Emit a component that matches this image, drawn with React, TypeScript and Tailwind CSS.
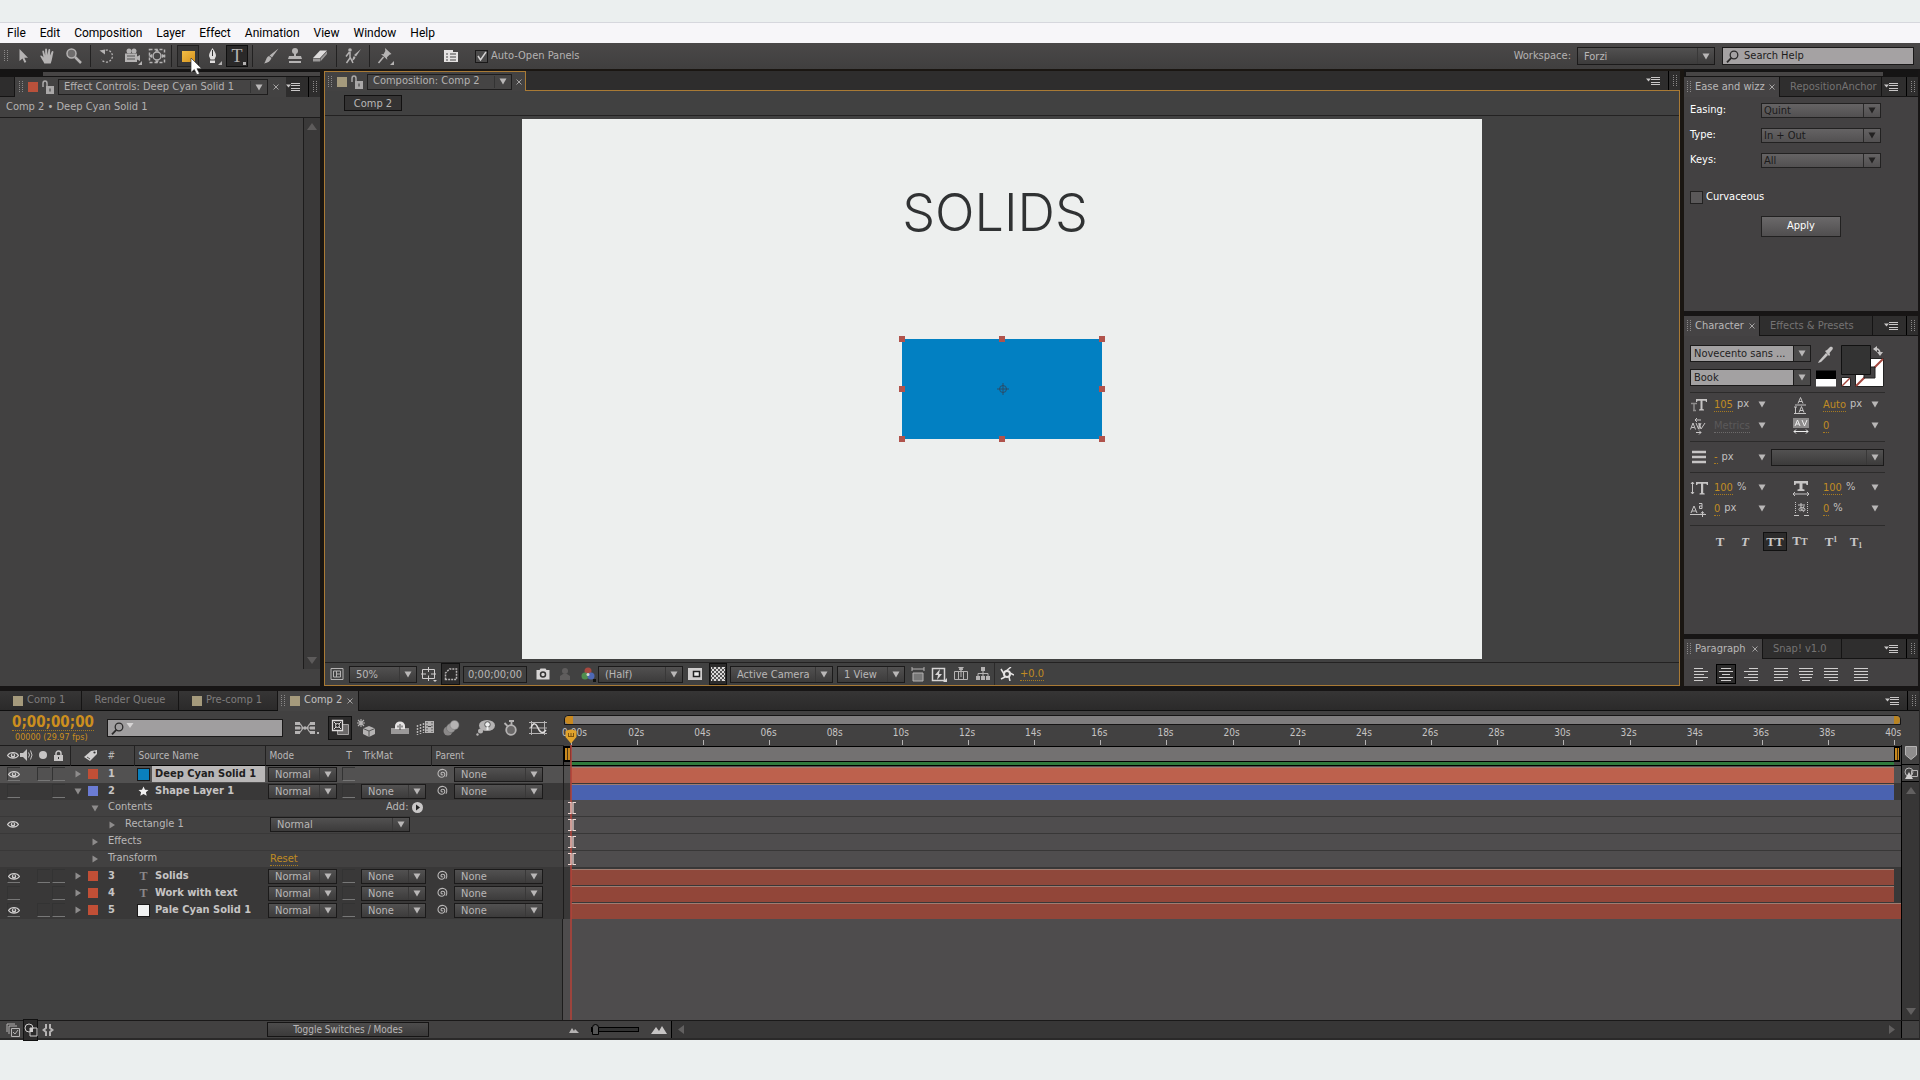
import type { ReactNode } from 'react';

const menus = ['File', 'Edit', 'Composition', 'Layer', 'Effect', 'Animation', 'View', 'Window', 'Help'];

const seconds = ['00s', '02s', '04s', '06s', '08s', '10s', '12s', '14s', '16s', '18s', '20s', '22s', '24s', '26s', '28s', '30s', '32s', '34s', '36s', '38s'];

type Row = {
  kind: 'layer' | 'group';
  name: string;
  id?: number;
  eye?: boolean;
  solo?: boolean;
  open?: boolean;
  selected?: boolean;
  swatch?: string;
  icon?: 'cyan' | 'pale' | 'star' | 'text';
  trkMat?: boolean;
  bar?: string;
  full?: boolean;
  indent?: string;
};

const rows: Row[] = [
  { kind: 'layer', id: 1, name: 'Deep Cyan Solid 1', eye: true, solo: true, selected: true, swatch: 'bg-[#c14f36]', icon: 'cyan', bar: 'bg-[#bd614d]' },
  { kind: 'layer', id: 2, name: 'Shape Layer 1', open: true, swatch: 'bg-[#6b7bd3]', icon: 'star', trkMat: true, bar: 'bg-[#4a62b0]' },
  { kind: 'group', name: 'Contents', open: true, indent: 'pl-[21px]' },
  { kind: 'group', name: 'Rectangle 1', eye: true, indent: 'pl-[38px]' },
  { kind: 'group', name: 'Effects', indent: 'pl-[21px]' },
  { kind: 'group', name: 'Transform', indent: 'pl-[21px]' },
  { kind: 'layer', id: 3, name: 'Solids', eye: true, solo: true, swatch: 'bg-[#c14f36]', icon: 'text', trkMat: true, bar: 'bg-[#8f483b]' },
  { kind: 'layer', id: 4, name: 'Work with text', swatch: 'bg-[#c14f36]', icon: 'text', trkMat: true, bar: 'bg-[#924639]' },
  { kind: 'layer', id: 5, name: 'Pale Cyan Solid 1', eye: true, solo: true, swatch: 'bg-[#c14f36]', icon: 'pale', trkMat: true, bar: 'bg-[#924639]', full: true },
];

function Icon({ children, w = 18, h = 18, className = '' }: { children: ReactNode; w?: number; h?: number; className?: string }) {
  return (
    <svg width={w} height={h} viewBox={`0 0 ${w} ${h}`} className={`shrink-0 ${className}`} fill="none" aria-hidden="true">
      {children}
    </svg>
  );
}

function Down({ className = 'text-[#b9b7b7]' }: { className?: string }) {
  return (
    <Icon w={8} h={7} className={className}>
      <path d="M0.500 0.500h7L4 6.500z" fill="currentColor" />
    </Icon>
  );
}

function Grip() {
  return (
    <Icon w={4} h={12} className="text-[#8b8989]">
      <path d="M0.500 0v12M3.500 0v12" stroke="currentColor" strokeDasharray="1 1" />
    </Icon>
  );
}

function PanelMenu() {
  return (
    <div className="flex h-full shrink-0 items-center">
      <button aria-label="Panel menu" className="mr-2 flex">
        <Icon w={14} h={10} className="text-[#c9c7c7]">
          <path d="M0 2.500h5L2.500 5.500zM5 1h9v1H5zM5 3h9v1H5zM5 6h9v1H5zM5 8h9v1H5z" fill="currentColor" />
        </Icon>
      </button>
      <div className="flex h-full w-3 items-center justify-center border-l border-black">
        <Grip />
      </div>
    </div>
  );
}

function CloseX() {
  return (
    <button aria-label="Close tab" className="flex shrink-0">
      <Icon w={6} h={6} className="text-[#a5a3a3]">
        <path d="M0.500 0.500l5 5M5.500 0.500l-5 5" stroke="currentColor" />
      </Icon>
    </button>
  );
}

function Lock() {
  return (
    <Icon w={12} h={14} className="text-[#aaa8a8]">
      <path d="M1 7V3.500C1 2 1.800 1 3 1s2 1 2 2.500V6" stroke="currentColor" strokeWidth="1.500" />
      <path d="M4 6h8v8H4z" fill="currentColor" />
      <path d="M7.500 8.500h1v3h-1z" fill="#333" />
    </Icon>
  );
}

function Dropdown({ label, value, className, tone = 'dark', id }: { label: string; value: string; className: string; tone?: 'dark' | 'light' | 'mid'; id?: string }) {
  const tones = {
    dark: 'border-[#1b1a1a] bg-linear-to-b from-[#525151] to-[#3c3b3b] text-[#b9b7b7] pl-[6px]',
    mid: 'border-[#222121] bg-linear-to-b from-[#656364] to-[#525051] text-[#1b1a1a] pl-[2px]',
    light: 'border-[#1b1a1a] bg-[#a3a1a2] text-[#1f1e1e] pl-[3px]',
  };
  return (
    <div className={`relative shrink-0 ${className}`}>
      <select id={id} aria-label={label} defaultValue={value} className={`block h-full w-full appearance-none overflow-hidden rounded-none border pr-4 leading-none outline-none ${tones[tone]}`}>
        <option>{value}</option>
      </select>
      <span className={`pointer-events-none absolute inset-y-px right-px flex w-[17px] items-center justify-center border-l ${tone === 'light' ? 'border-[#1b1a1a] bg-[#4b4a4a]' : tone === 'mid' ? 'border-[#2a2929]' : 'border-[#393838]'}`}>
        <Down className={tone === 'mid' ? 'text-[#222121]' : 'text-[#b9b7b7]'} />
      </span>
    </div>
  );
}

function Eye() {
  return (
    <Icon w={12} h={9} className="text-[#d0cece]">
      <path d="M0.500 4.500C3 0.500 9 0.500 11.500 4.500 9 8 3 8 0.500 4.500z" stroke="currentColor" strokeWidth="1.200" />
      <circle cx="6" cy="4.500" r="2.200" fill="currentColor" />
      <circle cx="6" cy="4" r="0.900" fill="#333" />
    </Icon>
  );
}

function Swirl() {
  return (
    <Icon w={12} h={12} className="text-[#b9b7b7]">
      <path d="M7 6.500c-.8.9-2.200.3-2-.9.200-1.500 2.300-1.900 3.300-.7 1.200 1.600.2 4-2 4.300C3.600 9.500 1.700 7.500 2 5c.4-2.700 3-4 5.500-3.500 1.600.3 2.800 1.500 3.200 3 .3 1.500 0 3-.8 4.300" stroke="currentColor" strokeWidth="1.100" />
    </Icon>
  );
}

function Twirl({ open }: { open?: boolean }) {
  return (
    <button aria-label={open ? 'Collapse' : 'Expand'} className="flex w-2 shrink-0 justify-center">
      <Icon w={8} h={8} className="text-[#8e8c8c]">
        <path d={open ? 'M0.500 1.500h7L4 7.500z' : 'M1.500 0.500v7L7 4z'} fill="currentColor" />
      </Icon>
    </button>
  );
}

function Sep() {
  return <div className="h-[22px] w-px shrink-0 bg-[#222121]" />;
}

function Tool({ label, className, children }: { label: string; className: string; children: ReactNode }) {
  return (
    <button aria-label={label} className={`relative flex h-[22px] shrink-0 items-center justify-center text-[#b5b3b3] ${className}`}>
      {children}
    </button>
  );
}

function MenuBar() {
  return (
    <nav className="flex h-[21px] items-center border-t border-[#d6d7dd] bg-[#f7f6f9] pl-[7px] font-['Roboto','Noto_Sans',sans-serif] text-[12px] text-black">
      {menus.map((menu) => (
        <button key={menu} className="mr-[14px] leading-none">{menu}</button>
      ))}
    </nav>
  );
}

function Toolbar() {
  return (
    <div className="flex h-[26px] items-center bg-linear-to-b from-[#4a4848] to-[#403f3f] pr-[6px]">
      <div className="flex w-[12px] justify-center"><Grip /></div>
      <Tool label="Selection" className="w-[22px]">
        <Icon><path d="M5.500 2v12l3-2.500 2 4.300 1.800-.8-2-4.200h3.700z" fill="currentColor" /></Icon>
      </Tool>
      <Tool label="Hand" className="w-[27px]">
        <Icon><path d="M5.300 16.500C4 13.500 2 11 1.200 9c.9-1 2.100-.1 3.300 1.500L3.300 4.300c.1-1.200 1.500-1.200 1.700 0l1.200 4.200L6.100 2.500c.1-1.300 1.800-1.300 1.900 0l.5 5.500.9-5.300c.3-1.200 1.800-1 1.800.3L11 8.500l1.700-4c.6-1 1.900-.5 1.700.7-.8 3.300-1.300 7.500-2.700 11.300z" fill="currentColor" /></Icon>
      </Tool>
      <Tool label="Zoom" className="w-[25px]">
        <Icon>
          <circle cx="6.500" cy="6.500" r="4.500" stroke="currentColor" strokeWidth="1.500" fill="#6f6d6d" />
          <path d="M10 10l6 6" stroke="currentColor" strokeWidth="2.500" />
        </Icon>
      </Tool>
      <div className="w-[4px]" />
      <Sep />
      <Tool label="Rotation" className="w-[32px]">
        <Icon>
          <path d="M4.500 4.500A6 6 0 1 1 3.500 12.500" stroke="currentColor" strokeWidth="1.300" strokeDasharray="2 1.500" />
          <path d="M1.500 3.500l5.500-1v5z" fill="currentColor" />
        </Icon>
      </Tool>
      <Tool label="Camera" className="w-[20px]">
        <Icon>
          <circle cx="5" cy="4" r="2.500" fill="currentColor" />
          <circle cx="10" cy="4" r="2.500" fill="currentColor" />
          <path d="M1 6.500h12V15H1zM13 9.500l3-1.500v6l-3-1.500z" fill="currentColor" />
          <path d="M3 9h8M3 12h8" stroke="#555" />
          <path d="M18 14v4h-4z" fill="currentColor" />
        </Icon>
      </Tool>
      <Tool label="Pan behind" className="w-[28px]">
        <Icon>
          <path d="M1.500 2.500h15v13h-15z" stroke="currentColor" strokeWidth="1.500" strokeDasharray="3 2" />
          <circle cx="9" cy="9" r="4" stroke="currentColor" strokeWidth="1.500" />
          <path d="M9 1.500l2 3H7zM9 16.500l2-3H7zM0.500 9l3.500-2v4zM17.500 9L14 7v4z" fill="currentColor" />
        </Icon>
      </Tool>
      <Sep />
      <Tool label="Rectangle" className="ml-[5px] w-[22px] border border-[#232222] bg-[#3a3939]">
        <span className="h-[11px] w-[13px] bg-linear-to-br from-[#f2bd45] to-[#d7941b]" />
        <svg width="14" height="21" viewBox="0 0 14 21" className="absolute top-[11px] left-[12px] z-10" aria-hidden="true">
          <path d="M1 1v14.500l3.300-3 2.600 5.300 2.700-1.100L7 11.700h4.800z" fill="#fff" stroke="#333" strokeWidth="0.700" />
        </svg>
      </Tool>
      <Tool label="Pen" className="ml-[2px] w-[23px]">
        <Icon>
          <path d="M8.500 1C6.500 4 5 6.500 5 9l1.500 3.500h4L12 9C12 6.500 10.500 4 8.500 1zM6 13.500h5V16H6z" fill="#e0dede" />
          <path d="M8.500 3v6" stroke="#333" />
          <path d="M18 14v4h-4z" fill="currentColor" />
        </Icon>
      </Tool>
      <Tool label="Type" className="ml-[2px] w-[22px] border border-[#0f0f0f] bg-[#2a2929]">
        <span className="font-['Liberation_Serif',serif] text-[18px] leading-none">T</span>
        <span className="absolute right-px bottom-px size-[3px] bg-[#b5b3b3]" />
      </Tool>
      <div className="w-[4px]" />
      <Sep />
      <Tool label="Brush" className="ml-[5px] w-[26px]">
        <Icon><path d="M16.500 1.500l-6.500 9-2.500-2zM7 9l2.500 2C8.500 14 6 16 2 16.500 4 14.500 4 10 7 9z" fill="currentColor" /></Icon>
      </Tool>
      <Tool label="Clone stamp" className="w-[22px]">
        <Icon>
          <circle cx="9" cy="4" r="3" fill="currentColor" />
          <path d="M8 6h2v3h5l1 3H2l1-3h5zM3 14h12v2H3z" fill="currentColor" />
        </Icon>
      </Tool>
      <Tool label="Eraser" className="ml-[2px] w-[24px]">
        <Icon>
          <path d="M2 11l7-7.500h7l-7 7.500z" fill="#dedcdc" />
          <path d="M2 11.500h7v3H2zM9.500 11.500l6.500-7v2.500l-6.500 7.500z" fill="#9b9999" />
        </Icon>
      </Tool>
      <div className="w-[4px]" />
      <Sep />
      <Tool label="Roto brush" className="w-[32px]">
        <Icon>
          <circle cx="6" cy="3" r="1.800" fill="currentColor" />
          <path d="M5.500 5L2 9.500M6 5v6l-3.500 5M6 10l3 6" stroke="currentColor" strokeWidth="1.500" />
          <path d="M17 2l-5 7.500-2-1.500zM10 9l1.500 1.500c-.8 2-2 3-4 3.500C9 12.500 8.500 10 10 9z" fill="currentColor" />
        </Icon>
      </Tool>
      <Sep />
      <Tool label="Puppet pin" className="w-[30px]">
        <Icon>
          <path d="M9 1l6.500 6-2 .7-2.500 2.500.3 2.500L5 7l2.500.2L9.300 4z" fill="currentColor" />
          <path d="M7.500 10L2.500 16" stroke="currentColor" strokeWidth="1.500" />
          <path d="M18 14v4h-4z" fill="currentColor" />
        </Icon>
      </Tool>
      <Tool label="Toggle panels" className="ml-[41px] w-[20px]">
        <Icon w={14} h={14} className="text-[#e4e2e2]">
          <path d="M0 1h9v2h5v10H0z" fill="currentColor" />
          <path d="M2 5h2M6 5h6M2 8h2M6 8h6M2 11h2M6 11h6" stroke="#444" />
        </Icon>
      </Tool>
      <label className="ml-[14px] flex items-center gap-[3px] whitespace-nowrap text-[#b4b2b2]">
        <span className="relative flex size-[13px]">
          <input type="checkbox" defaultChecked className="size-[13px] appearance-none border border-[#1a1919] bg-[#4c4b4b]" />
          <Icon w={13} h={13} className="pointer-events-none absolute inset-0">
            <path d="M3 6l2.500 4L11 2" stroke="#d5d3d3" strokeWidth="1.500" />
          </Icon>
        </span>
        Auto-Open Panels
      </label>
      <div className="min-w-4 flex-1" />
      <label htmlFor="workspace" className="mr-[6px] text-[#b4b2b2]">Workspace:</label>
      <Dropdown id="workspace" label="Workspace" value="Forzi" className="h-[18px] w-[138px]" />
      <div className="ml-[7px] flex h-[18px] w-[192px] items-center border border-[#1a1919] bg-[#a5a2a3] pl-[3px] text-[#242323]">
        <SearchGlyph />
        <input type="search" aria-label="Search Help" placeholder="Search Help" className="ml-[5px] w-full bg-transparent outline-none placeholder:text-[#1d1c1c]" />
      </div>
    </div>
  );
}

function SearchGlyph() {
  return (
    <Icon w={13} h={13} className="text-[#2b2a2a]">
      <circle cx="8" cy="5" r="3.800" stroke="currentColor" strokeWidth="1.300" />
      <path d="M5.300 7.800L1 12.300" stroke="currentColor" strokeWidth="1.800" />
    </Icon>
  );
}

function TitleMenu({ text, className }: { text: string; className: string }) {
  return (
    <button className={`flex h-[16px] shrink-0 items-center justify-between border border-[#1e1d1d] bg-[#454444] pl-[5px] whitespace-nowrap text-[#b4b2b2] ${className}`}>
      {text}
      <span className="flex h-[12px] w-[17px] items-center justify-center border-l border-[#333]"><Down /></span>
    </button>
  );
}

function EffectControls() {
  return (
    <section className="flex w-[320px] shrink-0 flex-col bg-[#424141]">
      <div className="flex h-[8px] bg-[#151414] pt-[3px] pl-[43px]"><div className="h-[4px] w-full bg-[#474545]" /></div>
      <div className="flex h-[20px] items-center bg-[#2e2d2d]">
        <div className="h-full w-[15px] border-r border-b border-[#151414]" />
        <div className="flex h-full flex-1 items-center bg-[#434242]">
          <div className="ml-1 flex"><Grip /></div>
          <div className="ml-[5px] size-[10px] bg-[#b9513b]" />
          <div className="mx-[4px] flex"><Lock /></div>
          <TitleMenu text="Effect Controls: Deep Cyan Solid 1" className="w-[210px]" />
          <div className="ml-[5px] flex"><CloseX /></div>
        </div>
        <PanelMenu />
      </div>
      <p className="h-[21px] border-b border-[#1d1c1c] pl-[6px] leading-[20px] text-[#b4b2b2]">Comp 2 • Deep Cyan Solid 1</p>
      <div className="flex flex-1 pb-[17px]">
        <div className="flex-1 border-r border-[#1d1c1c]" />
        <div className="flex w-[16px] flex-col items-center justify-between bg-[#3a3939] py-[5px]">
          <Icon w={10} h={7}><path d="M5 0l5 7H0z" fill="#5d5b5b" /></Icon>
          <Icon w={10} h={7}><path d="M5 7L0 0h10z" fill="#5d5b5b" /></Icon>
        </div>
      </div>
    </section>
  );
}

const handles = [
  '-top-[3px] -left-[3px]', '-top-[3px] left-[calc(50%-3px)]', '-top-[3px] -right-[3px]',
  'top-[calc(50%-3px)] -left-[3px]', 'top-[calc(50%-3px)] -right-[3px]',
  '-bottom-[3px] -left-[3px]', '-bottom-[3px] left-[calc(50%-3px)]', '-right-[3px] -bottom-[3px]',
];

function Viewer() {
  return (
    <section className="flex min-w-0 flex-1 flex-col bg-[#1a1612] px-[4px] pt-[2px]">
      <div className="flex h-[20px] items-stretch bg-[#2e2d2d]">
        <div className="flex items-center border border-b-0 border-[#a97a35] bg-[#434242] pr-[3px]">
          <div className="ml-[3px] flex"><Grip /></div>
          <div className="ml-[5px] size-[10px] bg-[#a59a7c]" />
          <div className="mx-[4px] flex"><Lock /></div>
          <TitleMenu text="Composition: Comp 2" className="w-[145px]" />
          <div className="ml-[4px] flex"><CloseX /></div>
        </div>
        <div className="flex flex-1 justify-end border-b border-[#a97a35]"><PanelMenu /></div>
      </div>
      <div className="flex flex-1 flex-col border border-t-0 border-[#a97a35] bg-[#414141]">
        <div className="flex h-[25px] items-center border-b border-[#232222] pl-[19px]">
          <button className="h-[16px] w-[58px] border border-[#121111] bg-[#343333] leading-none text-[#b9b7b7]">Comp 2</button>
        </div>
        <div className="flex flex-1 justify-center pt-[3px] pb-[3px]">
          <div className="flex aspect-video w-[960px] max-w-full flex-col items-center bg-[#edefee]">
            <h1 className="mt-[62px] mr-[14px] font-['Inter',sans-serif] text-[52px] leading-[64px] font-light text-[#303233]">SOLIDS</h1>
            <div className="relative mt-[94px] h-[100px] w-[200px] bg-[#0280c2]">
              {handles.map((pos) => <span key={pos} className={`absolute size-[6px] bg-[#b0534c] ${pos}`} />)}
              <Icon w={14} h={14} className="absolute top-[43px] left-[94px]">
                <circle cx="7" cy="7" r="3.500" stroke="#2b4d68" />
                <path d="M7 1v12M1 7h12" stroke="#2b4d68" />
              </Icon>
            </div>
          </div>
        </div>
        <ViewerFooter />
      </div>
    </section>
  );
}

function ViewerFooter() {
  return (
    <div className="flex h-[23px] items-center border-t border-[#232222] pl-[5px]">
      <Tool label="Always preview" className="w-[14px]">
        <Icon w={14} h={14}>
          <path d="M1 1.500h12v11H1zM3.500 4h7v6h-7zM6.500 4v6M6.500 7h4" stroke="currentColor" />
        </Icon>
      </Tool>
      <Dropdown label="Magnification" value="50%" className="ml-[5px] h-[17px] w-[68px]" />
      <Tool label="Grid and guides" className="ml-[3px] w-[18px]">
        <Icon w={16} h={16} className="text-[#cfcdcd]">
          <path d="M1.500 3.500h12v9h-12zM7.500 1v5M7.500 9.500V15M0 8h5M10 8h5" stroke="currentColor" />
          <path d="M12 14h4l-2 2z" fill="currentColor" />
        </Icon>
      </Tool>
      <Tool label="Mask visibility" className="ml-[3px] h-[18px] w-[19px] border border-[#111] bg-[#2c2b2b]">
        <Icon w={14} h={14}>
          <path d="M1.500 12.500V6l4-4h7v10.500z" stroke="currentColor" strokeWidth="1.500" strokeDasharray="2 1" />
        </Icon>
      </Tool>
      <button className="ml-[3px] h-[17px] w-[64px] border border-[#1b1a1a] leading-none whitespace-nowrap text-[#b9b7b7]">0;00;00;00</button>
      <Tool label="Snapshot" className="ml-[9px] w-[14px]">
        <Icon w={14} h={14} className="text-[#d7d5d5]">
          <path d="M0.500 3h3l1-1.500h5l1 1.500h3v9.500h-13z" fill="currentColor" />
          <circle cx="7" cy="7.500" r="2.500" fill="#d7d5d5" stroke="#333" strokeWidth="1.500" />
        </Icon>
      </Tool>
      <Tool label="Show snapshot" className="ml-[9px] w-[12px]">
        <Icon w={12} h={14} className="text-[#5f5d5d]">
          <circle cx="6" cy="4" r="3" fill="currentColor" />
          <path d="M1 13V9l3-2h4l3 2v4z" fill="currentColor" />
        </Icon>
      </Tool>
      <Tool label="Channels" className="ml-[9px] w-[16px]">
        <Icon w={16} h={16}>
          <circle cx="8" cy="5" r="3.500" fill="#a8483f" />
          <circle cx="5" cy="10" r="3.500" fill="#4f8d4e" />
          <circle cx="11" cy="10" r="3.500" fill="#4e68b5" />
          <circle cx="8" cy="8.500" r="1.500" fill="#d6d6d6" />
          <path d="M13 13h3v3h-3z" fill="#111" />
        </Icon>
      </Tool>
      <Dropdown label="Resolution" value="(Half)" className="ml-[2px] h-[17px] w-[85px]" />
      <Tool label="Region of interest" className="ml-[4px] w-[16px]">
        <Icon w={14} h={12} className="text-[#cfcdcd]">
          <path d="M0 0h14v12H0z" fill="currentColor" />
          <path d="M5.500 3.500h6v5h-6z" fill="#eee" stroke="#222" strokeWidth="1.500" />
        </Icon>
      </Tool>
      <Tool label="Transparency grid" className="ml-[6px] h-[18px] w-[18px] border border-[#111] bg-[#2c2b2b]">
        <Icon w={14} h={14}>
          <path d="M0 0h14v14H0z" fill="#dad8d8" />
          <path d="M0 3l3-3M0 7l7-7M0 11L11 0M1 14L14 1M5 14l9-9M9 14l5-5M0 11l3 3M0 7l7 7M0 3l11 11M1 0l13 13M5 0l9 9M9 0l5 5" stroke="#444" strokeWidth="0.900" />
        </Icon>
      </Tool>
      <Dropdown label="Camera" value="Active Camera" className="ml-[3px] h-[17px] w-[103px]" />
      <Dropdown label="View layout" value="1 View" className="ml-[4px] h-[17px] w-[68px]" />
      <Tool label="Pixel aspect" className="ml-[5px] w-[15px]">
        <Icon w={14} h={15}><path d="M1 2h12M1 0v4M13 0v4" stroke="currentColor" /><path d="M2 6h10v8H2z" fill="#777" stroke="currentColor" /></Icon>
      </Tool>
      <Tool label="Fast previews" className="ml-[6px] w-[16px]">
        <Icon w={16} h={15} className="text-[#d7d5d5]">
          <path d="M1.500 1.500h12v12h-12z" stroke="currentColor" strokeWidth="1.500" />
          <path d="M9 2L4 8h3l-1 5 5-6H8z" fill="currentColor" />
          <path d="M16 11v4h-4z" fill="currentColor" />
        </Icon>
      </Tool>
      <Tool label="Timeline" className="ml-[6px] w-[15px]">
        <Icon w={14} h={14}><path d="M0.500 4.500h13v8h-13zM4.500 4v9M9.500 4v9M5 2.500h4M7 2v8" stroke="currentColor" /><path d="M4 0h6L7 4z" fill="currentColor" /></Icon>
      </Tool>
      <Tool label="Flowchart" className="ml-[7px] w-[15px]">
        <Icon w={14} h={14}><path d="M5 0h4v4H5zM0 9h4v4H0zM5 9h4v4H5zM10 9h4v4h-4z" fill="currentColor" /><path d="M7 4v5M2 9V6.500h10V9" stroke="currentColor" /></Icon>
      </Tool>
      <div className="ml-[4px] h-full w-px bg-[#2b2a2a]" />
      <Tool label="Reset exposure" className="ml-[4px] w-[16px]">
        <Icon w={14} h={14} className="text-[#e4e2e2]">
          <circle cx="7" cy="7" r="3" stroke="currentColor" strokeWidth="2" />
          <path d="M4 7L1 2M6 4l5-4M10 6l4 2M9 10l1 4M5 10l-4 2" stroke="currentColor" strokeWidth="1.500" />
        </Icon>
      </Tool>
      <button className="ml-[5px] border-b border-dotted border-[#a87b20] leading-[13px] text-[#c08c24]">+0.0</button>
    </div>
  );
}

function PanelTabs({ active, other, activeWidth, otherWidth }: { active: string; other: string; activeWidth: string; otherWidth: string }) {
  return (
    <div className="flex h-[20px] items-center bg-[#2f2e2e]">
      <button className={`flex h-full shrink-0 items-center bg-[#454344] pl-[3px] whitespace-nowrap text-[#b9b7b7] ${activeWidth}`}>
        <Grip />
        <span className="ml-[4px] flex-1 text-left">{active}</span>
        <Icon w={6} h={6} className="mr-[4px] text-[#a5a3a3]"><path d="M0.500 0.500l5 5M5.500 0.500l-5 5" stroke="currentColor" /></Icon>
      </button>
      <button className={`h-full overflow-hidden border-r border-b border-l border-[#151414] pt-px pl-[10px] text-left whitespace-nowrap text-[#757373] ${otherWidth}`}>{other}</button>
      <div className="flex h-full flex-1 justify-end border-b border-[#151414]"><PanelMenu /></div>
    </div>
  );
}

function EaseAndWizz() {
  const fields = [
    { label: 'Easing:', id: 'easing', value: 'Quint' },
    { label: 'Type:', id: 'type', value: 'In + Out' },
    { label: 'Keys:', id: 'keys', value: 'All' },
  ];
  return (
    <section className="h-[242px] bg-[#434142]">
      <div className="h-[8px] bg-[#151414] pt-[3px] pl-[2px]"><div className="h-[4px] w-[197px] bg-[#474545]" /></div>
      <PanelTabs active="Ease and wizz" other="RepositionAnchor" activeWidth="w-[95px]" otherWidth="w-[103px]" />
      <div className="pt-px pl-[6px] text-white">
        {fields.map((field) => (
          <div key={field.id} className="flex h-[25px] items-center">
            <label htmlFor={field.id} className="w-[71px]">{field.label}</label>
            <Dropdown id={field.id} label={field.label} value={field.value} tone="mid" className="h-[15px] w-[120px]" />
          </div>
        ))}
        <label className="mt-[16px] flex items-center gap-[3px]">
          <input type="checkbox" className="size-[13px] appearance-none border border-[#222121] bg-[#5a5859]" />
          Curvaceous
        </label>
        <button className="mt-[10px] ml-[71px] block h-[21px] w-[80px] border border-[#222121] bg-linear-to-b from-[#6b696a] to-[#504e4f]">Apply</button>
      </div>
    </section>
  );
}

function Metric({ icon, value, unit, dim, label, wide }: { icon: ReactNode; value: string; unit?: string; dim?: boolean; label: string; wide?: boolean }) {
  return (
    <div className="flex h-[21px] min-w-0 items-center">
      <Icon w={18} h={18} className="text-[#c6c4c4]">{icon}</Icon>
      <button aria-label={label} className={`border-b border-dotted leading-[13px] ${wide ? 'ml-[13px]' : 'ml-[6px]'} ${dim ? '-mr-[4px] border-[#6d6b6b] text-[#5b595a]' : 'border-[#a87b20] text-[#c08c24]'}`}>{value}</button>
      <span className={`flex-1 whitespace-nowrap text-[#c2c0c0] ${unit ? 'pl-[4px]' : ''}`}>{unit}</span>
      <Down />
    </div>
  );
}

function MetricPair({ children }: { children: ReactNode }) {
  return <div className="grid grid-cols-[76px_87px] gap-x-[26px]">{children}</div>;
}

function Character() {
  return (
    <section className="mt-[5px] h-[318px] bg-[#434142]">
      <PanelTabs active="Character" other="Effects & Presets" activeWidth="w-[75px]" otherWidth="w-[114px]" />
      <div className="w-[201px] pt-[9px] pl-[6px]">
        <div className="flex gap-[5px]">
          <div className="flex flex-col gap-[7px]">
            <Dropdown label="Font family" value="Novecento sans ..." tone="light" className="h-[17px] w-[121px]" />
            <Dropdown label="Font style" value="Book" tone="light" className="h-[17px] w-[121px]" />
          </div>
          <svg width="70" height="44" viewBox="0 0 70 44" fill="none" aria-hidden="true" className="shrink-0">
            <path d="M3 16l7-8 2 2-7 7-3 1zM9 6l2-1 3-3c2-1 4 1 2 3l-2.500 3 .5 2-1 1z" fill="#c6c4c4" />
            <path d="M0 25.500h20V34H0z" fill="#000" />
            <path d="M0 34h20v7.500H0z" fill="#fff" />
            <path d="M39.500 13.500h28v28h-28z" fill="#fff" stroke="#222" />
            <path d="M40 41l27-27" stroke="#a3463d" strokeWidth="2" />
            <path d="M48 22h11v11H48z" fill="#434142" stroke="#222" />
            <path d="M25.500 0.500h29v29h-29z" fill="#333" stroke="#111" />
            <path d="M25.500 32.500h9v9h-9z" fill="#fff" stroke="#222" />
            <path d="M26 41l8-8" stroke="#a3463d" strokeWidth="1.500" />
            <path d="M58 4c4-1 6 1 6 5" stroke="#c6c4c4" strokeWidth="1.500" />
            <path d="M57 4l4-3v6zM64 11l-3-4h6z" fill="#c6c4c4" />
          </svg>
        </div>
        <div className="mt-[3px] border-t border-[#2c2b2b] pt-[1px] pb-[5px]">
          <MetricPair>
            <Metric label="Font size" value="105" unit="px" icon={<><path d="M6 3h11v3h-1l-.5-1.300h-3V13l1.500.5v1H9v-1l1.500-.5V4.700h-3L7 6H6z" fill="currentColor" /><path d="M1 7.500h6M4 8v7M3 14.500h3" stroke="#8e8c8c" strokeWidth="1.500" /></>} />
            <Metric wide label="Leading" value="Auto" unit="px" icon={<path d="M6 7.500l2.500-6 2.500 6M7 5.500h3M3 9h11M7 16.500l2.500-6 2.500 6M8 14.500h3M3.500 11v6M2 17.500h12M2 11h3" stroke="currentColor" />} />
            <Metric label="Kerning" value="Metrics" dim icon={<path d="M0.500 12.500L3 6l2.500 6.500M1.500 10.500h3M6 6l2.500 6L11 6M9 12.500V6l2 6 4-6M5 3h6M7 1L5 3l2 2M6 15.500h5M9 13.500l2 2-2 2" stroke="currentColor" />} />
            <Metric wide label="Tracking" value="0" icon={<><path d="M1 1h16v10H1z" fill="#8d8b8b" /><path d="M3 9l2.500-6L8 9M4 7h3M10 3l2.500 6L15 3M2 14.500h14M4 12.500l-2 2 2 2M14 12.500l2 2-2 2" stroke="#eee" /></>} />
          </MetricPair>
        </div>
        <div className="flex h-[31px] items-center border-t border-[#2c2b2b]">
          <div className="w-[76px]">
            <Metric label="Stroke width" value="-" unit="px" icon={<path d="M2 4h14M2 9h14M2 14h14" stroke="currentColor" strokeWidth="2.500" />} />
          </div>
          <Dropdown label="Stroke order" value="" className="ml-[5px] h-[17px] w-[113px]" />
        </div>
        <div className="border-t border-[#2c2b2b] pt-[4px] pb-[6px]">
          <MetricPair>
            <Metric label="Vertical scale" value="100" unit="%" icon={<><path d="M6 3h12v3h-1l-.8-1.300h-3V14l1.500.5v1H9.500v-1L11 14V4.700H8L7 6H6z" fill="currentColor" /><path d="M2.500 3v12M1 5l1.500-2L4 5M1 13l1.500 2L4 13" stroke="currentColor" /></>} />
            <Metric wide label="Horizontal scale" value="100" unit="%" icon={<><path d="M2 2h14v4h-1.500L14 4.500h-3.500V10l2 .5V12h-7v-1.500l2-.5V4.500H4L3.500 6H2z" fill="currentColor" /><path d="M1 15h16M3 13l-2 2 2 2M15 13l2 2-2 2" stroke="currentColor" /></>} />
            <Metric label="Baseline shift" value="0" unit="px" icon={<path d="M1 13l3-7 3 7M2 11h4M0 14.500h16M9 3.500h3v5H9.500V6H12M12.500 17v-5M11 13.500l1.500-2 1.500 2" stroke="currentColor" />} />
            <Metric wide label="Tsume" value="0" unit="%" icon={<><path d="M3.500 2v11M15.500 2v11" stroke="currentColor" strokeDasharray="1 1" /><path d="M6 5h7M9 3v6c0 2 2 2 3 1M12 6c-1 4-4 6-5 4s4-4 6-1c0 2-1 2-2 3M2 15.500h5M12 15.500h5" stroke="currentColor" /></>} />
          </MetricPair>
        </div>
        <div className="flex items-center border-t border-[#2c2b2b] pt-[6px] pl-[20px] font-['Liberation_Serif',serif] text-[13px] leading-[18px] font-bold text-[#c9c7c7]">
          <button className="h-[19px] w-[20px]">T</button>
          <button className="ml-[5px] h-[19px] w-[20px] italic">T</button>
          <button className="ml-[8px] h-[19px] w-[24px] border border-[#111] bg-[#2c2b2b] leading-[16px]">TT</button>
          <button className="ml-[3px] h-[19px] w-[20px]">T<span className="text-[10px]">T</span></button>
          <button className="ml-[11px] h-[19px] w-[20px]">T<sup className="text-[8px]">1</sup></button>
          <button className="ml-[5px] h-[19px] w-[20px]">T<sub className="text-[8px]">1</sub></button>
        </div>
      </div>
    </section>
  );
}

function Paragraph() {
  const aligns = [
    { label: 'Align left', gap: 'ml-[7px]', d: 'M1 1.500h9M1 4.500h14M1 7.500h10M1 10.500h14M1 13.500h9' },
    { label: 'Align center', gap: 'ml-[5px]', d: 'M3 1.500h10M1 4.500h14M4 7.500h8M1 10.500h14M3 13.500h10', on: true },
    { label: 'Align right', gap: 'ml-[5px]', d: 'M6 1.500h9M1 4.500h14M5 7.500h10M1 10.500h14M6 13.500h9' },
    { label: 'Justify last left', gap: 'ml-[10px]', d: 'M1 1.500h14M1 4.500h14M1 7.500h14M1 10.500h14M1 13.500h9' },
    { label: 'Justify last center', gap: 'ml-[5px]', d: 'M1 1.500h14M1 4.500h14M1 7.500h14M2 10.500h12M4 13.500h8' },
    { label: 'Justify last right', gap: 'ml-[5px]', d: 'M1 1.500h14M1 4.500h14M1 7.500h14M1 10.500h14M6 13.500h9' },
    { label: 'Justify all', gap: 'ml-[10px]', d: 'M1 1.500h14M1 4.500h14M1 7.500h14M1 10.500h14M1 13.500h14' },
  ];
  return (
    <section className="mt-[5px] flex-1 bg-[#434142]">
      <PanelTabs active="Paragraph" other="Snap! v1.0" activeWidth="w-[78px]" otherWidth="w-[80px]" />
      <div className="flex pt-[5px]">
        {aligns.map((a) => (
          <button key={a.label} aria-label={a.label} className={`flex size-[20px] items-center justify-center border text-[#d0cece] ${a.gap} ${a.on ? 'border-black bg-[#2c2b2b]' : 'border-transparent'}`}>
            <Icon w={16} h={15}><path d={a.d} stroke="currentColor" strokeWidth="1.200" /></Icon>
          </button>
        ))}
      </div>
    </section>
  );
}

function TimelineTabs() {
  return (
    <div className="flex h-[20px] items-center border-b border-[#0f0f0f] bg-linear-to-b from-[#363535] to-[#2b2a2a] text-[#7f7d7d]">
      <button className="flex h-full w-[82px] items-center gap-[4px] border-r border-[#151414] pl-[13px]"><span className="size-[10px] bg-[#a59a7c]" />Comp 1</button>
      <button className="h-full w-[97px] border-r border-[#151414] text-center">Render Queue</button>
      <button className="flex h-full w-[99px] items-center gap-[4px] border-r border-[#151414] pl-[13px]"><span className="size-[10px] bg-[#a59a7c]" />Pre-comp 1</button>
      <div className="flex h-[20px] w-[81px] items-center border-r border-[#151414] bg-[#454444] pl-[3px] text-[#c2c0c0]">
        <Grip />
        <span className="ml-[5px] size-[10px] bg-[#a59a7c]" />
        <span className="mr-[5px] ml-[4px] whitespace-nowrap">Comp 2</span>
        <CloseX />
      </div>
      <div className="flex h-full flex-1 justify-end"><PanelMenu /></div>
    </div>
  );
}

function TimelineHead() {
  return (
    <div className="flex h-[34px] bg-[#424141]">
      <div className="flex w-[563px] shrink-0 items-center">
        <div className="w-[98px] pl-[12px] text-[#cc8f1e]">
          <button className="block border-b border-dotted border-[#a87b20] text-[15px] leading-[16px] font-bold">0;00;00;00</button>
          <p className="pl-[3px] text-[9px] leading-[12px] whitespace-nowrap">00000 (29.97 fps)</p>
        </div>
        <div className="ml-[9px] flex h-[18px] w-[176px] items-center border border-[#1a1919] bg-[#a09e9f] pl-[3px]">
          <SearchGlyph />
          <Icon w={8} h={5} className="mb-[5px] ml-[2px]"><path d="M0.500 0h7L4 5z" fill="#d6d4d4" /></Icon>
          <input type="search" aria-label="Search layers" className="w-full bg-transparent outline-none" />
        </div>
        <Tool label="Mini flowchart" className="ml-[11px] w-[26px]">
          <Icon w={24} h={14}><path d="M0 1h5v3H0zM0 5.500h5v3H0zM0 10h5v3H0zM15 1h5v3h-5zM15 5.500h5v3h-5zM15 10h5v3h-5zM22 11h2v2h-2z" fill="currentColor" /><path d="M5 2.500l3 4.500-3 4.500M5 7h10M15 2.500L12 7l3 4.500" stroke="currentColor" strokeWidth="1.200" /><circle cx="10" cy="7" r="1.800" fill="currentColor" /></Icon>
        </Tool>
        <Tool label="Live update" className="ml-[8px] h-[24px] w-[24px] border border-[#111] bg-[#2c2b2b]">
          <Icon><path d="M6.500 5.500h11v10h-11z" fill="#6a6868" stroke="#a5a3a3" /><path d="M1.500 1.500h10v10h-10z" fill="#2c2b2b" stroke="#dedcdc" strokeWidth="1.300" /><path d="M3 3l7 7M10 3l-7 7" stroke="#dedcdc" /><circle cx="6.500" cy="6.500" r="2" stroke="#dedcdc" fill="#2c2b2b" /></Icon>
        </Tool>
        <Tool label="Draft 3D" className="ml-[3px] w-[22px]">
          <Icon w={20} h={20}><path d="M5 1v8M1 5h8M2 2l6 6M8 2L2 8" stroke="currentColor" strokeWidth="1.100" /><path d="M7 10.500l6-2.500 6 2.500v5.500l-6 3-6-3z" fill="currentColor" /><path d="M7 10.500l6 2.500 6-2.500M13 13v6" stroke="#555" /></Icon>
        </Tool>
        <Tool label="Hide shy layers" className="ml-[13px] w-[20px]">
          <Icon w={20} h={18}><path d="M1 9h18v6H1z" fill="#9b9999" /><path d="M5 10V7a5 4.500 0 0 1 10 0v3z" fill="#e6e4e4" /><path d="M10 5v6M8 6.500v2M12 6.500v2" stroke="#444" /></Icon>
        </Tool>
        <Tool label="Frame blending" className="ml-[6px] w-[20px]">
          <Icon w={20} h={18}><path d="M1.500 6v10M4.500 5v10M7.500 4v10" stroke="currentColor" strokeWidth="1.500" strokeDasharray="2 1" /><path d="M9 2h9v12H9z" fill="currentColor" /><path d="M11 3v10M16 3v10" stroke="#444" strokeDasharray="1.500 1.500" /><path d="M12 7.500h3" stroke="#444" /></Icon>
        </Tool>
        <Tool label="Motion blur" className="ml-[6px] w-[20px]">
          <Icon w={20} h={18}><circle cx="6" cy="12" r="4.500" fill="#8a8888" /><circle cx="9" cy="9" r="4.500" fill="#9b9999" stroke="#666" strokeWidth="0.500" /><circle cx="12.500" cy="6" r="4.500" fill="currentColor" stroke="#777" strokeWidth="0.500" /></Icon>
        </Tool>
        <Tool label="Brainstorm" className="ml-[14px] w-[20px]">
          <Icon w={20} h={18}><ellipse cx="11" cy="6.500" rx="8" ry="5.500" fill="currentColor" /><circle cx="4.500" cy="12" r="2.500" fill="currentColor" /><circle cx="1.500" cy="15.500" r="1.200" fill="currentColor" /><circle cx="11.500" cy="5.500" r="2.800" fill="#eee" stroke="#555" /><path d="M10.500 8h2v3h-2z" fill="#eee" /></Icon>
        </Tool>
        <Tool label="Auto keyframe" className="ml-[6px] w-[18px]">
          <Icon><circle cx="9" cy="11" r="4.800" fill="#6a6868" stroke="currentColor" strokeWidth="1.800" /><path d="M7 2h5M9.500 2v4M2.500 4l3 3" stroke="currentColor" strokeWidth="1.800" /></Icon>
        </Tool>
        <Tool label="Graph editor" className="ml-[8px] w-[20px]">
          <Icon w={20} h={16}><path d="M1 2.500h18M1 8h18M1 13.500h18M3.500 1v14M16.500 1v14" stroke="currentColor" /><path d="M3 8C5 2 8 3 10 8s5 6 8 2" stroke="#e0dede" strokeWidth="1.500" /></Icon>
        </Tool>
      </div>
      <div className="flex min-w-0 flex-1 flex-col pt-[4px]">
        <div className="mr-[18px] ml-[1px] flex h-[10px] rounded-t-sm border border-[#151414] bg-[#7f7d7e]">
          <div className="h-full w-[8px] rounded-l-sm bg-[#c9891f]" />
          <div className="flex-1" />
          <div className="h-full w-[6px] rounded-r-sm bg-[#b98422]" />
        </div>
        <div className="mr-[25px] ml-[8px] flex h-[20px] text-[10px] text-[#c6c4c4]">
          {seconds.map((s) => (
            <div key={s} className="relative min-w-0 flex-1">
              <span className="absolute top-[1px] -left-[9px] leading-[13px]">{s === '00s' ? '0:00s' : s}</span>
              <span className="absolute bottom-0 left-0 h-[5px] w-px bg-[#b5b3b3]" />
            </div>
          ))}
          <div className="relative w-0">
            <span className="absolute top-[1px] -left-[9px] leading-[13px]">40s</span>
            <span className="absolute bottom-0 left-0 h-[5px] w-px bg-[#b5b3b3]" />
          </div>
        </div>
      </div>
    </div>
  );
}

function SwitchBox({ className = '', children }: { className?: string; children?: ReactNode }) {
  return (
    <button aria-label="Switch" className={`flex h-[14px] w-[13px] shrink-0 items-center justify-center border-t border-b border-l border-t-[#333] border-b-[#777] border-l-[#333] ${className}`}>
      {children}
    </button>
  );
}

function LayerIcon({ kind }: { kind?: Row['icon'] }) {
  if (kind === 'cyan') return <span className="size-[13px] shrink-0 border border-[#1a1919] bg-[#0a80bd]" />;
  if (kind === 'pale') return <span className="size-[13px] shrink-0 border border-[#1a1919] bg-[#f0f1f1]" />;
  if (kind === 'star') {
    return <Icon w={13} h={12}><path d="M6.500 1.500l1.500 3.200 3.500.3-2.600 2.300.8 3.500-3.200-1.900-3.200 1.900.8-3.500L1.500 5 5 4.700z" fill="#f0efef" /></Icon>;
  }
  return <span className="w-[13px] shrink-0 text-center font-['Liberation_Serif',serif] text-[12px] leading-none font-bold text-[#8a8888]">T</span>;
}

function LayerRow({ row }: { row: Row }) {
  const bg = row.selected ? 'bg-[#525151]' : 'bg-[#393838]';
  return (
    <tr className={bg}>
      <td>
        <div className="flex h-[17px] items-center pl-[7px]">
          <SwitchBox>{row.eye && <Eye />}</SwitchBox>
          {row.solo ? <SwitchBox className="ml-[17px]" /> : <span className="w-[30px]" />}
          <SwitchBox className="ml-[2px]" />
        </div>
      </td>
      <td>
        <div className="flex h-[17px] items-center pl-[4px]">
          <Twirl open={row.open} />
          <span className={`ml-[6px] size-[10px] ${row.swatch}`} />
          <span className="ml-[10px] font-bold text-[#c6c4c4]">{row.id}</span>
        </div>
      </td>
      <td>
        <div className="flex h-[17px] items-center pl-[3px]">
          <LayerIcon kind={row.icon} />
          <span className={`ml-[2px] flex-1 pl-[3px] leading-[16px] font-bold whitespace-nowrap ${row.selected ? 'bg-[#b9b7b7] text-[#1f1e1e]' : 'text-[#c6c4c4]'}`}>{row.name}</span>
        </div>
      </td>
      <td><div className="pl-[3px]"><Dropdown label={`Mode ${row.id}`} value="Normal" className="h-[15px] w-[69px]" /></div></td>
      <td><div className="flex h-[17px] items-center pl-[2px]"><SwitchBox /></div></td>
      <td>{row.trkMat && <div className="pl-[3px]"><Dropdown label={`TrkMat ${row.id}`} value="None" className="h-[15px] w-[65px]" /></div>}</td>
      <td>
        <div className="flex h-[17px] items-center pl-[5px]">
          <Swirl />
          <Dropdown label={`Parent ${row.id}`} value="None" className="ml-[6px] h-[15px] w-[89px]" />
        </div>
      </td>
      <td className="border-l border-[#1d1c1c]">
        <div className={`h-[17px] pt-px pl-[7px] ${row.full ? '' : 'pr-[7px]'}`}>
          <div className={`h-[16px] border-t border-[#a07c70] ${row.bar}`} />
        </div>
      </td>
    </tr>
  );
}

function GroupRow({ row }: { row: Row }) {
  return (
    <tr className="bg-[#424141]">
      <td><div className="flex h-[17px] items-center border-b border-[#393838] pl-[7px]">{row.eye && <Eye />}</div></td>
      <td colSpan={2}>
        <div className={`flex h-[17px] items-center border-b border-[#393838] text-[#b9b7b7] ${row.indent}`}>
          <Twirl open={row.open} />
          <span className="ml-[9px]">{row.name}</span>
        </div>
      </td>
      <td colSpan={4}>
        <div className="flex h-[17px] items-center border-b border-[#393838] pl-[5px] text-[#b9b7b7]">
          {row.name === 'Rectangle 1' && <Dropdown label="Rectangle mode" value="Normal" className="h-[15px] w-[140px]" />}
          {row.name === 'Transform' && <button className="border-b border-dotted border-[#a87b20] leading-[13px] text-[#c08c24]">Reset</button>}
          {row.name === 'Contents' && (
            <button className="ml-[116px] flex items-center gap-[4px]">
              Add:
              <Icon w={11} h={11}><circle cx="5.500" cy="5.500" r="5.500" fill="#c9c7c7" /><path d="M4 2.500v6l4-3z" fill="#222" /></Icon>
            </button>
          )}
        </div>
      </td>
      <td className="border-l border-[#1d1c1c] bg-[#4f4d4e]">
        <div className="flex h-[17px] items-center border-b border-[#383737] pl-[4px]">
          <Icon w={8} h={12} className="relative z-10"><path d="M0 .5h3v11H0M8 .5H5v11h3" stroke="#f0d8d3" strokeWidth="1.200" /></Icon>
        </div>
      </td>
    </tr>
  );
}

function LayerTable() {
  const head = 'border-l border-[#222121] pl-[4px] text-left font-normal';
  return (
    <table className="w-full table-fixed">
      <colgroup>
        <col className="w-[70px]" />
        <col className="w-[64px]" />
        <col className="w-[131px]" />
        <col className="w-[75px]" />
        <col className="w-[18px]" />
        <col className="w-[73px]" />
        <col className="w-[132px]" />
        <col />
      </colgroup>
      <thead>
        <tr className="h-[19px] border-b border-black bg-[#434242] text-[10px] text-[#b9b7b7]">
          <th aria-label="Switches" className="border-t border-t-[#1d1c1c]">
            <div className="flex items-center pl-[7px]">
              <Eye />
              <Icon w={13} h={12} className="ml-[1px]"><path d="M0 4h3l4-4v12L3 8H0z" fill="#c6c4c4" /><path d="M8.500 3.500q2 2.500 0 5M10.500 1.500q3 4.500 0 9" stroke="#c6c4c4" /></Icon>
              <span className="ml-[6px] size-[8px] rounded-full bg-[#c6c4c4]" />
              <Icon w={9} h={11} className="ml-[7px]"><path d="M0 5h9v6H0z" fill="#c6c4c4" /><path d="M2 5V3.500a2.500 2.500 0 0 1 5 0V5" stroke="#c6c4c4" strokeWidth="1.500" /><path d="M4 7h1v2H4z" fill="#333" /></Icon>
            </div>
          </th>
          <th className="border-t border-l border-[#222121] font-normal">
            <div className="flex items-center pl-[12px]">
              <Icon w={15} h={12}><path d="M1 8l7-6 6-1v4l-7 7z" fill="#d0cece" /><circle cx="11.500" cy="3.500" r="1.100" fill="#333" /><path d="M4 8l3 2" stroke="#555" /></Icon>
              <span className="ml-[10px]">#</span>
            </div>
          </th>
          <th className={`border-t ${head}`}>Source Name</th>
          <th className={`border-t ${head}`}>Mode</th>
          <th className="border-t border-[#222121] font-normal">T</th>
          <th className="border-t border-[#222121] pl-[5px] text-left font-normal">TrkMat</th>
          <th className={`border-t ${head}`}>Parent</th>
          <th aria-label="Work area" className="border-l border-black">
            <div className="h-[19px] border-t border-black">
              <div className="mr-px flex h-[15px] border-b border-black bg-[#737171]">
                <div className="flex w-[7px] justify-evenly border border-black bg-[#c9891f]"><span className="w-px bg-[#4c3510]" /></div>
                <div className="flex-1" />
                <div className="flex w-[6px] justify-evenly border border-black bg-[#c9891f]"><span className="w-px bg-[#4c3510]" /></div>
              </div>
              <div className="mr-[7px] ml-[7px] h-[3px] bg-[#2f7a3d]" />
            </div>
          </th>
        </tr>
      </thead>
      <tbody>
        {rows.map((row) => (row.kind === 'layer' ? <LayerRow key={row.name} row={row} /> : <GroupRow key={row.name} row={row} />))}
      </tbody>
    </table>
  );
}

function Timeline() {
  return (
    <section className="mt-[5px] flex flex-1 flex-col border-r border-[#2a2929] bg-[#424141]">
      <TimelineTabs />
      <TimelineHead />
      <div className="flex flex-1">
        <div className="relative flex min-w-0 flex-1 flex-col">
          <LayerTable />
          <div className="flex flex-1">
            <div className="w-[563px] shrink-0 border-r border-[#1d1c1c] bg-[#414141]" />
            <div className="flex-1 bg-[#4e4c4d]" />
          </div>
          <div className="absolute top-0 bottom-0 left-[570px] w-[2px] bg-[#b2423a]/80" />
          <svg width="12" height="15" viewBox="0 0 12 15" className="absolute -top-[16px] left-[565px]" aria-hidden="true">
            <path d="M0.500 2Q6-1 11.500 2v6L6 14.500.5 8z" fill="#e2a42c" />
            <path d="M3.500 4v3M6 4v3M8.500 4v3M3 7.500h6" stroke="#7d5410" />
          </svg>
        </div>
        <div className="flex w-[18px] shrink-0 flex-col items-center border-l border-black bg-[#424141]">
          <Icon w={12} h={14} className="mt-[1px]"><path d="M0.500 0.500h11V9L6 13.500.5 9z" fill="#8f8d8d" stroke="#b5b3b3" /></Icon>
          <div className="mt-[4px] flex h-[18px] w-full items-center justify-center border-t border-b border-black">
            <Icon w={14} h={12}><circle cx="5" cy="5" r="4" stroke="#b5b3b3" /><path d="M7.500 3.500h6v6h-6z" stroke="#b5b3b3" /><path d="M5 5l4 7H1z" fill="#d0cece" /></Icon>
          </div>
          <div className="flex w-full flex-1 flex-col items-center justify-between bg-[#373636] py-[5px]">
            <Icon w={10} h={7}><path d="M5 0l5 7H0z" fill="#626060" /></Icon>
            <Icon w={10} h={7}><path d="M5 7L0 0h10z" fill="#626060" /></Icon>
          </div>
        </div>
      </div>
      <div className="flex h-[18px] items-center border-t border-[#1a1919] bg-[#424141]">
        <div className="flex w-[267px] items-center gap-[3px] pl-[6px]">
          <Tool label="Layer switches" className="h-[16px] w-[14px]">
            <Icon w={14} h={14}><path d="M1 9V1h8M3 11V3h8M5.500 5.500h8v8h-8z" stroke="currentColor" /><path d="M7 9l2 2 3-4" stroke="currentColor" /></Icon>
          </Tool>
          <Tool label="Transfer controls" className="h-[16px] w-[15px] border border-[#111] bg-[#2c2b2b]">
            <Icon w={14} h={14} className="text-[#d0cece]"><circle cx="5" cy="5" r="4" stroke="currentColor" /><path d="M6 5h7v8H6z" stroke="currentColor" /><path d="M6 5h3v4H6z" fill="currentColor" /></Icon>
          </Tool>
          <Tool label="In and out" className="h-[16px] w-[14px]">
            <Icon w={12} h={14}><path d="M4 1v4L1.500 7 4 9v4M8 1v4l2.500 2L8 9v4" stroke="currentColor" strokeWidth="2" /></Icon>
          </Tool>
        </div>
        <button className="h-[15px] w-[162px] border border-[#151414] bg-linear-to-b from-[#4d4c4c] to-[#3b3a3a] text-[10px] leading-none text-[#b9b7b7]">Toggle Switches / Modes</button>
        <Icon w={10} h={7} className="ml-[140px]"><path d="M0 7l3-5 2 3 1-2 4 4z" fill="#b5b3b3" /></Icon>
        <input type="range" aria-label="Timeline zoom" defaultValue={0} className="ml-[12px] h-[5px] w-[48px] appearance-none border border-black bg-[#333] [&::-webkit-slider-thumb]:h-[11px] [&::-webkit-slider-thumb]:w-[7px] [&::-webkit-slider-thumb]:appearance-none [&::-webkit-slider-thumb]:rounded-t [&::-webkit-slider-thumb]:border [&::-webkit-slider-thumb]:border-black [&::-webkit-slider-thumb]:bg-[#555]" />
        <Icon w={16} h={9} className="ml-[12px]"><path d="M0 9l5-7 3 4 3-5 5 8z" fill="#c6c4c4" /></Icon>
        <div className="ml-[4px] flex h-full flex-1 items-center justify-between border-l border-black bg-[#373636] px-[6px]">
          <Icon w={6} h={9}><path d="M6 0v9L0 4.500z" fill="#626060" /></Icon>
          <Icon w={6} h={9}><path d="M0 0v9l6-4.500z" fill="#626060" /></Icon>
        </div>
        <div className="h-full w-[18px] border-l border-black" />
      </div>
    </section>
  );
}

export default function App() {
  return (
    <div className="flex min-h-screen w-full flex-col bg-[#ebefef] pt-[22px] pb-[40px] font-['DejaVu_Sans_Condensed','DejaVu_Sans',sans-serif] text-[11px]">
      <MenuBar />
      <div className="flex flex-1 flex-col border-b-2 border-[#2a2929] bg-[#171515]">
        <Toolbar />
        <main className="flex flex-1 flex-col">
          <div className="flex">
            <EffectControls />
            <Viewer />
            <aside className="flex w-[236px] shrink-0 flex-col pr-[2px]">
              <EaseAndWizz />
              <Character />
              <Paragraph />
            </aside>
          </div>
          <Timeline />
        </main>
      </div>
    </div>
  );
}
